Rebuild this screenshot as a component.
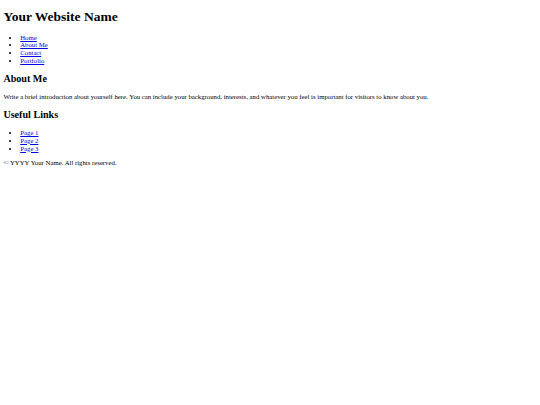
import React from 'react'

const navLinks = ['Home', 'About Me', 'Contact', 'Portfolio']
const usefulLinks = ['Page 1', 'Page 2', 'Page 3']

const LinkList: React.FC<{ items: string[] }> = ({ items }) => (
  <ul className="list-disc pl-[16.875px] my-[6.75px]">
    {items.map((item) => (
      <li key={item}>
        <a href="#" className="text-[#0000ee] underline">
          {item}
        </a>
      </li>
    ))}
  </ul>
)

export default function App() {
  return (
    <div className="m-[3.375px] font-['Liberation_Serif','Times_New_Roman',serif] text-[6.75px] leading-[1.149] text-black">
      <header>
        <h1 className="text-[13.5px] font-bold my-[9.045px]">Your Website Name</h1>
        <nav>
          <LinkList items={navLinks} />
        </nav>
      </header>

      <main>
        <section>
          <h2 className="text-[10.125px] font-bold my-[8.4px]">About Me</h2>
          <p className="my-[6.75px]">
            Write a brief introduction about yourself here. You can include your background, interests, and whatever you feel is important for visitors to know about you.
          </p>
        </section>

        <section>
          <h2 className="text-[10.125px] font-bold my-[8.4px]">Useful Links</h2>
          <LinkList items={usefulLinks} />
        </section>
      </main>

      <footer>
        <p className="my-[6.75px]">© YYYY Your Name. All rights reserved.</p>
      </footer>
    </div>
  )
}
